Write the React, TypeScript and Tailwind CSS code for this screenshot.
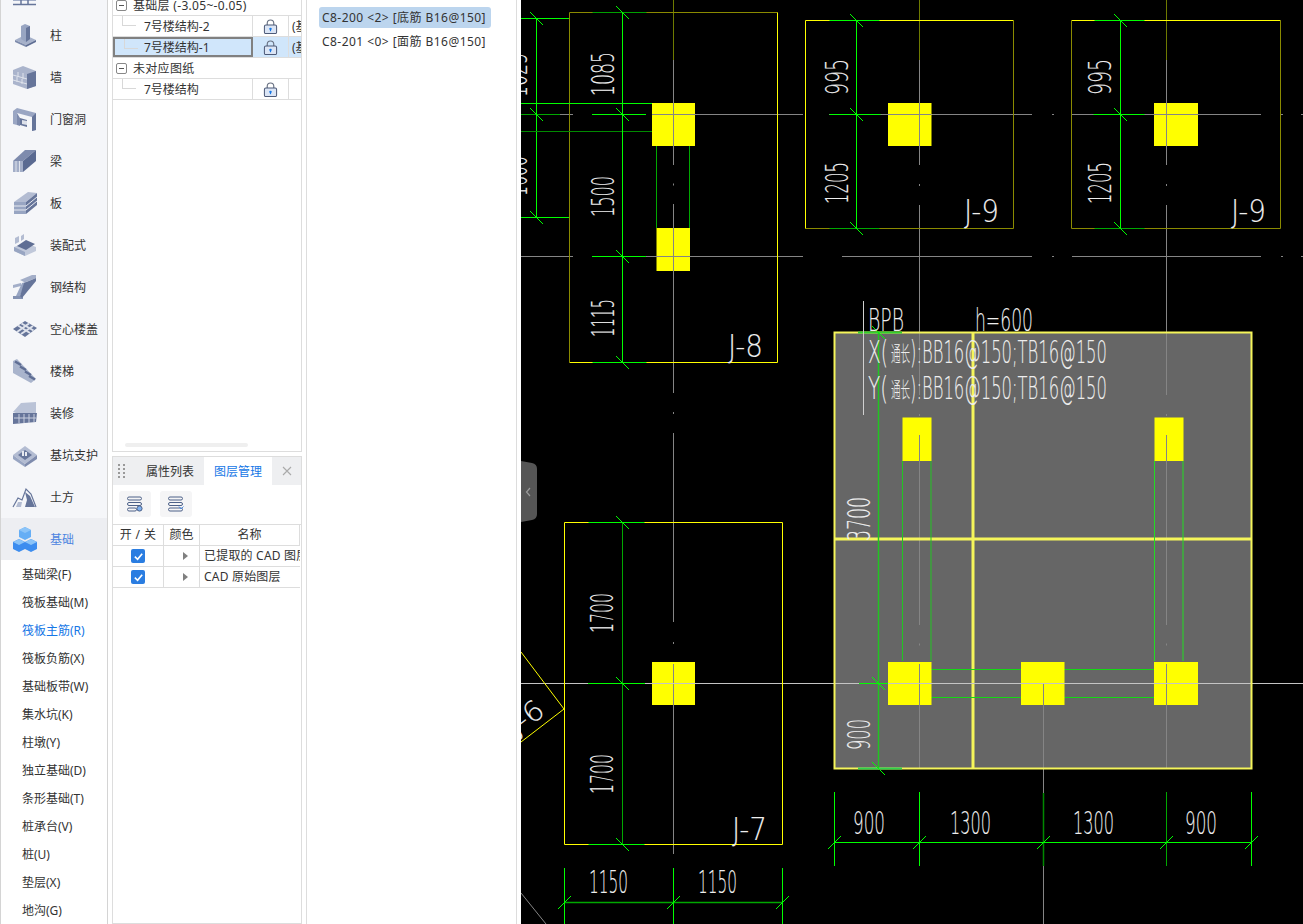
import React from "react";

const GREEN = "#00ff00";
const DARK = "#00a800";
const YEL = "#ffff00";
const OLIVE = "#8a8a00";
const GREY = "#858585";
const LIGHT = "#c4c4c4";

const Ico = ({ children }: { children: React.ReactNode }) => (
  <svg viewBox="0 0 26 26" className="w-[26px] h-[26px] shrink-0">
    {children}
  </svg>
);

const navIcons: React.ReactNode[] = [
  <Ico key="0">
    <polygon points="1,6 24,6 24,21 1,21" fill="#a3aec8" />
    <path d="M1 24.5H24M9 14V24M16 14V24" stroke="#66759a" strokeWidth="1.5" />
  </Ico>,
  <Ico key="1">
    <polygon points="3,18 13,13 24,18 14,23" fill="#a6b1ca" />
    <polygon points="3,18 14,23 14,25 3,20" fill="#7d8bac" />
    <polygon points="14,23 24,18 24,20 14,25" fill="#5f6e94" />
    <polygon points="9,4 13,2 18,4 18,17 14,20 9,17" fill="#98a5c2" />
    <polygon points="14,6 18,4 18,17 14,20" fill="#66759a" />
  </Ico>,
  <Ico key="2">
    <polygon points="1,6 11,2 24,7 24,22 15,25 1,20" fill="#aab4cc" />
    <polygon points="15,10 24,7 24,22 15,25" fill="#66759a" />
    <path d="M1 11L15 15M1 16L15 20M6 8V13M11 9V15M5 13V18M10 15V20" stroke="#dfe3ec" strokeWidth="1" />
  </Ico>,
  <Ico key="3">
    <polygon points="1,5 5,2 24,7 24,24 20,25 20,11 5,7 5,19 1,18" fill="#9aa6c3" />
    <polygon points="20,11 24,7 24,24 20,25" fill="#66759a" />
    <polygon points="8,12 15,14 15,21 8,19" fill="#66759a" />
    <polygon points="10,14 15,15 15,19 10,18" fill="#dde1ea" />
    <polygon points="5,19 8,20 8,12 5,7" fill="#7e8bad" />
  </Ico>,
  <Ico key="4">
    <polygon points="1,13 13,2 24,2 11,13" fill="#7e8bad" />
    <polygon points="11,13 24,2 24,13 11,24" fill="#5a6a91" />
    <polygon points="1,13 11,13 11,24 1,24" fill="#a3aec8" />
    <path d="M4 13V24M7.5 13V24" stroke="#dfe3ec" strokeWidth="1" />
  </Ico>,
  <Ico key="5">
    <polygon points="2,12 14,12 25,3 16,2" fill="#b3bcd2" />
    <polygon points="2,12 14,12 14,24 2,24" fill="#98a5c2" />
    <polygon points="14,12 25,3 25,15 14,24" fill="#66759a" />
    <path d="M2 16H14L25 7M2 20H14L25 11" stroke="#e6e9f0" strokeWidth="1" fill="none" />
  </Ico>,
  <Ico key="6">
    <polygon points="2,15 13,11 24,15 24,19 13,24 2,19" fill="#c0c8da" />
    <polygon points="5,14 14,8 23,12 14,18" fill="#5f6e94" />
    <polygon points="3,6 7,4 7,10 3,12" fill="#b3bcd2" />
    <polygon points="9,4 12,2 12,7 9,9" fill="#b3bcd2" />
    <polygon points="2,15 13,20 13,24 2,19" fill="#98a5c2" />
  </Ico>,
  <Ico key="7">
    <polygon points="8,6 20,1 24,1 24,4 14,8 12,8" fill="#a3aec8" />
    <polygon points="10,9 14,8 8,22 4,22" fill="#98a5c2" />
    <polygon points="1,22 11,22 11,25 1,25" fill="#8492b2" />
    <polygon points="1,11 9,9 9,12 1,14" fill="#a3aec8" />
    <polygon points="12,9 24,4 24,7 10,24 8,22" fill="#66759a" />
  </Ico>,
  <Ico key="8">
    <polygon points="1,13 13,5 25,12 13,21" fill="#66759a" />
    <path d="M6 9.5L18 17M9.5 7.5L21.5 14.5M5 16L17 7.5M9 18L21 10" stroke="#dfe3ec" strokeWidth="2" />
  </Ico>,
  <Ico key="9">
    <polygon points="1,3 5,1 24,21 19,25 1,15" fill="#a9b4cc" />
    <path d="M3 3.5L9 7M8 8.5L14 12M13 13.5L19 17M17 18L23 21.5" stroke="#5f6e94" strokeWidth="2.4" />
  </Ico>,
  <Ico key="10">
    <polygon points="1,12 9,3 24,2 24,15 10,15" fill="#bac3d7" />
    <polygon points="1,13 25,13 24,22 1,24" fill="#66759a" />
    <path d="M2 18H24M7 14V23M12 14V23M17 14V23M22 14V22" stroke="#c8cfdf" strokeWidth="1" />
  </Ico>,
  <Ico key="11">
    <polygon points="1,13 13,4 25,13 13,22" fill="#b3bcd2" />
    <polygon points="1,13 13,22 13,25 1,17" fill="#98a5c2" />
    <polygon points="13,22 25,13 25,17 13,25" fill="#7e8bad" />
    <polygon points="6,13 13,8 20,13 13,18" fill="#66759a" />
    <path d="M11 14V9M14 14V10" stroke="#e6e9f0" strokeWidth="2" />
  </Ico>,
  <Ico key="12">
    <path d="M1 23L6 14L10 16L14 5L19 10L24 23" fill="none" stroke="#66759a" strokeWidth="1.2" />
    <polygon points="13,8 18,12 23,23 13,23 15,16" fill="#66759a" />
    <polygon points="6,18 10,18 9,23 4,23" fill="#b3bcd2" />
  </Ico>,
  <Ico key="13">
    <polygon points="13,1 19,4 19,11 13,14 7,11 7,4" fill="#66aef5" />
    <polygon points="7,13 13,16 13,23 7,26 1,23 1,16" fill="#3d8def" />
    <polygon points="19,13 25,16 25,23 19,26 13,23 13,16" fill="#3d8def" />
    <polygon points="7,4 13,7 19,4 13,1" fill="#8cc4f8" />
    <polygon points="1,16 7,19 13,16 7,13" fill="#8cc4f8" />
    <polygon points="13,16 19,19 25,16 19,13" fill="#8cc4f8" />
  </Ico>,
];

const navLabels = ["", "柱", "墙", "门窗洞", "梁", "板", "装配式", "钢结构", "空心楼盖", "楼梯", "装修", "基坑支护", "土方", "基础"];
const subItems = ["基础梁(F)", "筏板基础(M)", "筏板主筋(R)", "筏板负筋(X)", "基础板带(W)", "集水坑(K)", "柱墩(Y)", "独立基础(D)", "条形基础(T)", "桩承台(V)", "桩(U)", "垫层(X)", "地沟(G)"];

const Sidebar = () => (
  <div className="w-[108px] shrink-0 h-full border-x border-[#d4d4d4] overflow-hidden text-[12px] text-[#333]">
    <div className="-mt-[28px]">
      {navLabels.map((label, i) => (
        <div key={i} className={`h-[42px] flex items-center pl-[11px] gap-[12px] whitespace-nowrap ${i === 13 ? "bg-[#edeef2] text-[#4c84e0]" : "bg-[#f5f6f9]"}`}>
          {navIcons[i]}
          <span className="pt-px">{label}</span>
        </div>
      ))}
      <div className="pt-px">
        {subItems.map((s) => (
          <div key={s} className={`h-[28px] flex items-center pl-[21px] whitespace-nowrap ${s === "筏板主筋(R)" ? "text-[#1677e6]" : ""}`}>
            {s}
          </div>
        ))}
      </div>
    </div>
  </div>
);

const Lock = () => (
  <svg viewBox="0 0 16 16" className="w-[15px] h-[15px]">
    <path d="M4.5 7V4.5a3.5 3.5 0 0 1 7 0V7" fill="none" stroke="#666f80" strokeWidth="1.2" />
    <rect x="1.5" y="6.5" width="13" height="9" rx="1.5" fill="#dbe5f5" stroke="#4d5a78" strokeWidth="1.1" />
    <circle cx="8" cy="10.5" r="1.3" fill="#1677e6" />
    <rect x="7.4" y="10.5" width="1.2" height="2.5" fill="#1677e6" />
  </svg>
);

const GroupRow = ({ label }: { label: string }) => (
  <div className="h-[21px] border-b border-[#ddd] flex items-center pl-[3px] gap-[6px] whitespace-nowrap">
    <span className="w-[11px] h-[11px] border border-[#888] rounded-[2px] flex items-center justify-center">
      <span className="w-[5px] h-px bg-[#555]" />
    </span>
    <span className="tracking-[0.3px] pt-px">{label}</span>
  </div>
);

const SheetRow = ({ label, note, selected }: { label: string; note?: string; selected?: boolean }) => (
  <div className={`h-[21px] border-b border-[#ddd] flex ${selected ? "bg-[#d0e6fb]" : ""}`}>
    <div className={`relative w-[140px] pt-px flex items-center shrink-0 ${selected ? "border-2 border-[#808080] pl-[29px]" : "border-r border-[#ddd] pl-[31px]"}`}>
      <span className="absolute left-[9px] top-0 h-[10px] w-[14px] border-l border-b border-[#d8d8d8]" />
      {label}
    </div>
    <div className="w-[36px] shrink-0 border-r border-[#ddd] flex items-center justify-center">
      <Lock />
    </div>
    <div className="flex-1 overflow-hidden whitespace-nowrap pl-[3px] pt-px flex items-center">{note}</div>
  </div>
);

const Check = () => (
  <span className="w-[14px] h-[14px] rounded-[2px] bg-[#2a7de1] flex items-center justify-center">
    <svg viewBox="0 0 12 12" className="w-[11px] h-[11px]">
      <path d="M2 6.2L5 9L10 3" fill="none" stroke="#fff" strokeWidth="1.8" />
    </svg>
  </span>
);

const LayerRow = ({ name }: { name: string }) => (
  <div className="h-[21px] border-b border-[#ddd] flex">
    <div className="w-[51px] shrink-0 border-r border-[#ddd] flex items-center justify-center">
      <Check />
    </div>
    <div className="w-[36px] shrink-0 border-r border-[#ddd] flex items-center justify-center">
      <span className="w-0 h-0 border-y-[4px] border-y-transparent border-l-[5px] border-l-[#808080] ml-[8px]" />
    </div>
    <div className="flex-1 overflow-hidden whitespace-nowrap pl-[4px] flex items-center tracking-[0.2px]">{name}</div>
  </div>
);

const LayerBtn = ({ variant }: { variant: number }) => (
  <div className="w-[32px] h-[26px] rounded-[3px] bg-[#f5f5f6] flex items-center justify-center">
    <svg viewBox="0 0 18 16" className="w-[18px] h-[16px]" fill="none" stroke="#4d6188" strokeWidth="1">
      <rect x="1.5" y="1" width="14" height="3" rx="1.5" />
      <rect x="1.5" y="6.5" width="14" height="3" rx="1.5" />
      <rect x="1.5" y="12" width={variant === 0 ? 9 : 14} height="3" rx="1.5" />
      {variant === 0 ? <circle cx="13.5" cy="12.5" r="2.6" fill="#7fb0ee" stroke="#4d6188" /> : <path d="M12 10.5L14 13L16.5 10.5" stroke="#4d8be0" />}
    </svg>
  </div>
);

const MidColumn = () => (
  <div className="w-[190px] shrink-0 ml-[4px] h-full flex flex-col text-[12px] text-[#333]">
    <div className="h-[452px] shrink-0 border-x border-b border-[#ddd] overflow-hidden relative">
      <div className="-mt-[5px]">
        <GroupRow label="基础层 (-3.05~-0.05)" />
        <SheetRow label="7号楼结构-2" note="(基" />
        <SheetRow label="7号楼结构-1" note="(基" selected />
        <GroupRow label="未对应图纸" />
        <SheetRow label="7号楼结构" />
      </div>
      <div className="absolute left-[12px] top-[443px] w-[123px] h-[4px] rounded-full bg-[#efefef]" />
    </div>
    <div className="flex-1 mt-[4px] border border-[#ddd] min-h-0">
      <div className="h-[28px] bg-[#eeeff1] flex items-center">
        <svg viewBox="0 0 7 14" className="w-[7px] h-[14px] ml-[5px]" fill="#999">
          {[0, 4, 8, 12].map((y) => (
            <g key={y}>
              <rect x="0" y={y} width="2" height="2" />
              <rect x="5" y={y} width="2" height="2" />
            </g>
          ))}
        </svg>
        <span className="ml-[21px] pt-px">属性列表</span>
        <span className="ml-[10px] bg-white h-full px-[10px] pt-px flex items-center text-[#1677e6]">图层管理</span>
        <svg viewBox="0 0 10 10" className="w-[10px] h-[10px] ml-[10px]">
          <path d="M1 1L9 9M9 1L1 9" stroke="#aaa" strokeWidth="1.1" />
        </svg>
      </div>
      <div className="h-[40px] flex items-start gap-[9px] pl-[6px] pt-[6px] border-b border-[#ddd]">
        <LayerBtn variant={0} />
        <LayerBtn variant={1} />
      </div>
      <div className="pr-px">
        <div className="h-[21px] border-b border-[#ddd] flex text-center">
          <div className="w-[51px] shrink-0 border-r border-[#ddd] flex items-center justify-center whitespace-pre tracking-[0.4px]">开 / 关</div>
          <div className="w-[36px] shrink-0 border-r border-[#ddd] flex items-center justify-center">颜色</div>
          <div className="flex-1 flex items-center justify-center border-r border-[#ddd]">名称</div>
        </div>
        <LayerRow name="已提取的 CAD 图层" />
        <LayerRow name="CAD 原始图层" />
      </div>
    </div>
  </div>
);

const ListPanel = () => (
  <div className="w-[211px] shrink-0 ml-[4px] h-full border-x border-[#ddd] pl-[12px] pt-[7px] text-[12px] text-[#333] whitespace-pre tracking-[0.45px]">
    <div className="w-[172px] h-[21px] rounded-[3px] bg-[#bcd5ee] flex items-center pl-[3px]">C8-200 &lt;2&gt; [底筋 B16@150]</div>
    <div className="w-[172px] h-[21px] mt-[3px] flex items-center pl-[3px]">C8-201 &lt;0&gt; [面筋 B16@150]</div>
  </div>
);

const L = ({ p, c, w = 1 }: { p: number[]; c: string; w?: number }) => (
  <line x1={p[0]} y1={p[1]} x2={p[2]} y2={p[3]} stroke={c} strokeWidth={w} />
);

// dimension tick, "\" on vertical dims and "/" on horizontal ones
const Tick = ({ x, y, up }: { x: number; y: number; up?: boolean }) => (
  <line x1={x - 6.5} y1={up ? y + 6.5 : y - 6.5} x2={x + 6.5} y2={up ? y - 6.5 : y + 6.5} stroke={GREEN} strokeWidth="1" />
);

const T = ({ x, y, s, len, size = 32, rot = 0, font }: { x: number; y: number; s: string; len: number; size?: number; rot?: number; font?: string }) => (
  <text
    x={x}
    y={y}
    fontSize={size}
    fontWeight={200}
    fontFamily={font ?? "'DejaVu Sans', sans-serif"}
    fill="#eeeeee"
    stroke="#eeeeee"
    strokeWidth="0.1"
    textLength={len}
    lengthAdjust="spacingAndGlyphs"
    transform={rot ? `rotate(${rot} ${x} ${y})` : undefined}
  >
    {s}
  </text>
);

const Col = ({ x, y, w, h }: { x: number; y: number; w: number; h: number }) => (
  <rect x={x} y={y} width={w} height={h} fill={YEL} />
);

// vertical axis with the usual break and dot
const VAxis = ({ x, from, gaps }: { x: number; from: number; gaps: number[][] }) => {
  let start = from;
  return (
    <>
      {gaps.map(([a, b], i) => {
        const s = start;
        start = b;
        return (
          <g key={i}>
            <L p={[x, s, x, a]} c={GREY} />
            <L p={[x, (a + b) / 2 - 1, x, (a + b) / 2 + 1]} c={GREY} />
          </g>
        );
      })}
    </>
  );
};

const Box = ({ x, y, w, h, stub, half = 27, topC = GREEN, botC = DARK, olive }: { x: number; y: number; w: number; h: number; stub: number; half?: number; topC?: string; botC?: string; olive: string[] }) => {
  const r = x + w;
  const b = y + h;
  const cl = (side: string) => (olive.includes(side) ? OLIVE : YEL);
  return (
    <>
      <L p={[x, y, r, y]} c={cl("t")} />
      <L p={[r, y, r, b]} c={cl("r")} />
      <L p={[x, b, r, b]} c={cl("b")} />
      <L p={[x, y, x, b]} c={cl("l")} />
      <L p={[stub - half, y, stub + half, y]} c={topC} />
      <L p={[stub - half, b, stub + half, b]} c={botC} />
    </>
  );
};

const Canvas = () => (
  <div className="flex-1 h-full bg-black overflow-hidden">
    <svg width="782" height="924" viewBox="521 0 782 924" className="block">
      {/* filled slab */}
      <rect x="834.5" y="332.5" width="417" height="436" fill="#666666" />

      {/* axes */}
      <L p={[673.5, 0, 673.5, 60]} c="#6e7a00" />
      <VAxis x={673.5} from={60} gaps={[[165, 204], [393, 433], [622, 664], [853, 853]]} />
      <L p={[919.5, 0, 919.5, 60]} c="#6e7a00" />
      <VAxis x={919.5} from={60} gaps={[[165, 205], [395, 435], [625, 664], [768, 768]]} />
      <L p={[1166.5, 0, 1166.5, 60]} c="#6e7a00" />
      <VAxis x={1166.5} from={60} gaps={[[165, 205], [395, 435], [625, 664], [768, 768]]} />
      <L p={[1043.5, 683, 1043.5, 924]} c={GREY} />

      <L p={[521, 114.5, 573, 114.5]} c={GREY} />
      <L p={[695, 114.5, 803, 114.5]} c={GREY} />
      <L p={[829, 114.5, 1032, 114.5]} c={GREY} />
      <L p={[1052, 114.5, 1054, 114.5]} c={GREY} />
      <L p={[1072, 114.5, 1261, 114.5]} c={GREY} />
      <L p={[1281, 114.5, 1283, 114.5]} c={GREY} />
      <L p={[1301, 114.5, 1303, 114.5]} c={GREY} />
      <L p={[521, 256.5, 573, 256.5]} c={GREY} />
      <L p={[592, 256.5, 803, 256.5]} c={GREY} />
      <L p={[842, 256.5, 1032, 256.5]} c={GREY} />
      <L p={[1052, 256.5, 1054, 256.5]} c={GREY} />
      <L p={[1072, 256.5, 1261, 256.5]} c={GREY} />
      <L p={[1281, 256.5, 1283, 256.5]} c={GREY} />
      <L p={[1301, 256.5, 1303, 256.5]} c={GREY} />
      <L p={[521, 683.5, 1303, 683.5]} c={LIGHT} />

      {/* footing outlines */}
      <Box x={569.5} y={12.5} w={208} h={350} stub={619.5} topC="#00a000" botC={GREEN} olive={["t", "l"]} />
      <Box x={805.5} y={20.5} w={208} h={208} stub={854.5} half={25} olive={["b", "r"]} />
      <Box x={1071.5} y={20.5} w={209} h={208} stub={1119.5} half={25} olive={["b", "l", "r"]} />
      <Box x={564.5} y={522.5} w={218} h={322} stub={616.5} half={28} botC={GREEN} olive={[]} />

      {/* left neighbour dims */}
      <L p={[521, 18.5, 569, 18.5]} c={GREEN} />
      <L p={[521, 114.5, 560, 114.5]} c={DARK} />
      <L p={[521, 217.5, 569, 217.5]} c={GREEN} />
      <L p={[536.5, 18, 536.5, 217]} c={GREEN} />
      {[18.5, 114.5, 217.5].map((y) => (
        <Tick key={y} x={536.5} y={y} />
      ))}
      <T x={527} y={97} s="1025" len={44} rot={-90} />
      <T x={527} y={196} s="1600" len={40} rot={-90} />
      <L p={[521, 103.5, 652, 103.5]} c={GREEN} />
      <L p={[521, 131.5, 652, 131.5]} c="#008a00" />

      {/* J-8 */}
      <L p={[622.5, 12, 622.5, 362]} c={GREEN} />
      <L p={[592, 114.5, 646, 114.5]} c={GREEN} />
      <L p={[592, 256.5, 646, 256.5]} c={GREEN} />
      {[12.5, 114.5, 256.5, 362.5].map((y) => (
        <Tick key={y} x={622.5} y={y} />
      ))}
      <L p={[656.5, 146, 656.5, 228]} c={DARK} />
      <L p={[689.5, 146, 689.5, 228]} c={DARK} />
      <T x={614} y={96} s="1085" len={44} rot={-90} />
      <T x={614} y={217} s="1500" len={41} rot={-90} />
      <T x={614} y={337} s="1115" len={38} rot={-90} />
      <T x={728} y={357} s="J-8" len={35} />

      {/* J-9 pair */}
      {[
        [856.5, 848, 964],
        [1120.5, 1111, 1231],
      ].map(([dx, tx, jx]) => (
        <g key={dx}>
          <L p={[dx, 20, dx, 229]} c={GREEN} />
          <L p={[dx - 27, 114.5, dx + 24, 114.5]} c={GREEN} />
          {[20.5, 114.5, 228.5].map((y) => (
            <Tick key={y} x={dx} y={y} />
          ))}
          <T x={tx} y={95} s="995" len={36} rot={-90} />
          <T x={tx} y={204} s="1205" len={42} rot={-90} />
          <T x={jx} y={222} s="J-9" len={35} />
        </g>
      ))}

      {/* J-7 */}
      <L p={[622.5, 522, 622.5, 844]} c={DARK} />
      <L p={[588, 683.5, 645, 683.5]} c={GREEN} />
      {[522.5, 683.5, 844.5].map((y) => (
        <Tick key={y} x={622.5} y={y} />
      ))}
      <T x={613} y={633} s="1700" len={40} rot={-90} />
      <T x={613} y={794} s="1700" len={40} rot={-90} />
      <T x={732} y={840} s="J-7" len={35} />
      <L p={[564.5, 868, 564.5, 924]} c={GREEN} />
      <L p={[673.5, 868, 673.5, 924]} c={GREEN} />
      <L p={[782.5, 868, 782.5, 924]} c={GREEN} />
      <L p={[564, 902.5, 782, 902.5]} c={DARK} w={1.5} />
      {[564.5, 673.5, 782.5].map((x) => (
        <Tick key={x} x={x} y={902.5} up />
      ))}
      <T x={589} y={893} s="1150" len={39} />
      <T x={698} y={893} s="1150" len={39} />

      {/* J-6 corner */}
      <L p={[521, 652, 564, 709]} c={YEL} />
      <L p={[564, 709, 521, 742]} c={YEL} />
      <T x={517} y={736} s="J-6" len={37} size={28} rot={-37} />
      <L p={[521, 893, 546, 924]} c={GREY} />

      {/* slab edges */}
      <rect x="834.5" y="332.5" width="417" height="436" fill="none" stroke="#f5f55a" strokeWidth="2" />
      <L p={[973, 332, 973, 769]} c="#f5f55a" w={3} />
      <L p={[834, 539, 1252, 539]} c="#f5f55a" w={3} />
      <L p={[858, 332.5, 902, 332.5]} c="#30d030" w={2} />
      <L p={[858, 768.5, 902, 768.5]} c="#30d050" w={2} />
      <L p={[859, 683.5, 902, 683.5]} c={GREEN} />

      {/* slab rebar */}
      <L p={[878.5, 332, 878.5, 768]} c="#22c422" w={1.5} />
      <Tick x={878.5} y={332.5} />
      <Tick x={878.5} y={683.5} />
      <Tick x={878.5} y={768.5} />
      <L p={[902.5, 461, 902.5, 661]} c="#22c422" />
      <L p={[931, 461, 931, 661]} c="#22c422" />
      <L p={[1154.5, 461, 1154.5, 661]} c="#22dd22" />
      <L p={[1183, 461, 1183, 661]} c="#22dd22" />
      <L p={[931, 669.5, 1021, 669.5]} c="#14d814" />
      <L p={[1064, 669.5, 1154, 669.5]} c="#14d814" />
      <L p={[931, 697.5, 1021, 697.5]} c="#14d814" />
      <L p={[1064, 697.5, 1154, 697.5]} c="#14d814" />

      {/* columns */}
      <Col x={652} y={103} w={43} h={43} />
      <Col x={656.5} y={228} w={33.5} h={43} />
      <Col x={888} y={103} w={43.5} h={43} />
      <Col x={1154} y={103} w={44} h={43} />
      <Col x={652} y={662} w={43} h={43} />
      <Col x={902.5} y={417.5} w={29} h={43.5} />
      <Col x={1154.5} y={417.5} w={29} h={43.5} />
      <Col x={888} y={662} w={43.5} h={43} />
      <Col x={1021} y={662} w={43.5} h={43} />
      <Col x={1154} y={662} w={44} h={43} />
      {/* axes seen through the columns */}
      <L p={[673.5, 103, 673.5, 146]} c={GREY} />
      <L p={[673.5, 228, 673.5, 271]} c={GREY} />
      <L p={[652, 114.5, 695, 114.5]} c={GREY} />
      <L p={[656, 256.5, 690, 256.5]} c={GREY} />
      <L p={[673.5, 664, 673.5, 705]} c={GREY} />
      <L p={[652, 683.5, 695, 683.5]} c={LIGHT} />
      <L p={[919.5, 103, 919.5, 146]} c={GREY} />
      <L p={[888, 114.5, 931, 114.5]} c={GREY} />
      <L p={[1166.5, 103, 1166.5, 146]} c={GREY} />
      <L p={[1154, 114.5, 1198, 114.5]} c={GREY} />
      <L p={[919.5, 435, 919.5, 461]} c={GREY} />
      <L p={[1166.5, 435, 1166.5, 461]} c={GREY} />
      <L p={[919.5, 664, 919.5, 705]} c={GREY} />
      <L p={[1166.5, 664, 1166.5, 705]} c={GREY} />
      <L p={[1043.5, 683, 1043.5, 705]} c={GREY} />
      <L p={[888, 683.5, 1198, 683.5]} c={LIGHT} />

      {/* slab annotation */}
      <L p={[863.5, 301, 863.5, 415]} c="#d0d0d0" />
      <T x={868} y={331} s="BPB" len={36} />
      <T x={975} y={331} s="h=600" len={58} />
      {[363, 399].map((y, i) => (
        <g key={y}>
          <T x={868} y={y} s={i === 0 ? "X(" : "Y("} len={20} />
          <T x={891} y={y - 2} s="通长" len={19} size={21} font="'Noto Sans CJK SC', sans-serif" />
          <T x={910} y={y} s="):BB16@150;TB16@150" len={197} />
        </g>
      ))}
      <T x={870} y={541} s="3700" len={44} rot={-90} />
      <T x={870} y={750} s="900" len={31} rot={-90} />

      {/* bottom dims */}
      {[834.5, 919.5, 1166.5, 1251.5].map((x) => (
        <L key={x} p={[x, 792, x, 866]} c={x === 1166.5 ? DARK : GREEN} />
      ))}
      <L p={[1043.5, 793, 1043.5, 866]} c="#008800" w={1.5} />
      <L p={[834, 842.5, 1252, 842.5]} c={GREEN} />
      {[834.5, 919.5, 1043.5, 1166.5, 1251.5].map((x) => (
        <Tick key={x} x={x} y={842.5} up />
      ))}
      <T x={853} y={834} s="900" len={32} />
      <T x={950} y={834} s="1300" len={41} />
      <T x={1073} y={834} s="1300" len={41} />
      <T x={1185} y={834} s="900" len={32} />

      {/* collapse handle */}
      <path d="M521 461L532 463Q537 464 537 469V514Q537 519 532 520L521 522Z" fill="#555555" />
      <path d="M530 488L526.5 492L530 496" fill="none" stroke="#9a9a9a" strokeWidth="1.2" />
    </svg>
  </div>
);

export default function App() {
  return (
    <div className="w-[1303px] h-[924px] overflow-hidden flex bg-white font-['Noto_Sans','Noto_Sans_CJK_SC',sans-serif]">
      <Sidebar />
      <MidColumn />
      <ListPanel />
      <div className="w-[4px] shrink-0" />
      <Canvas />
    </div>
  );
}
